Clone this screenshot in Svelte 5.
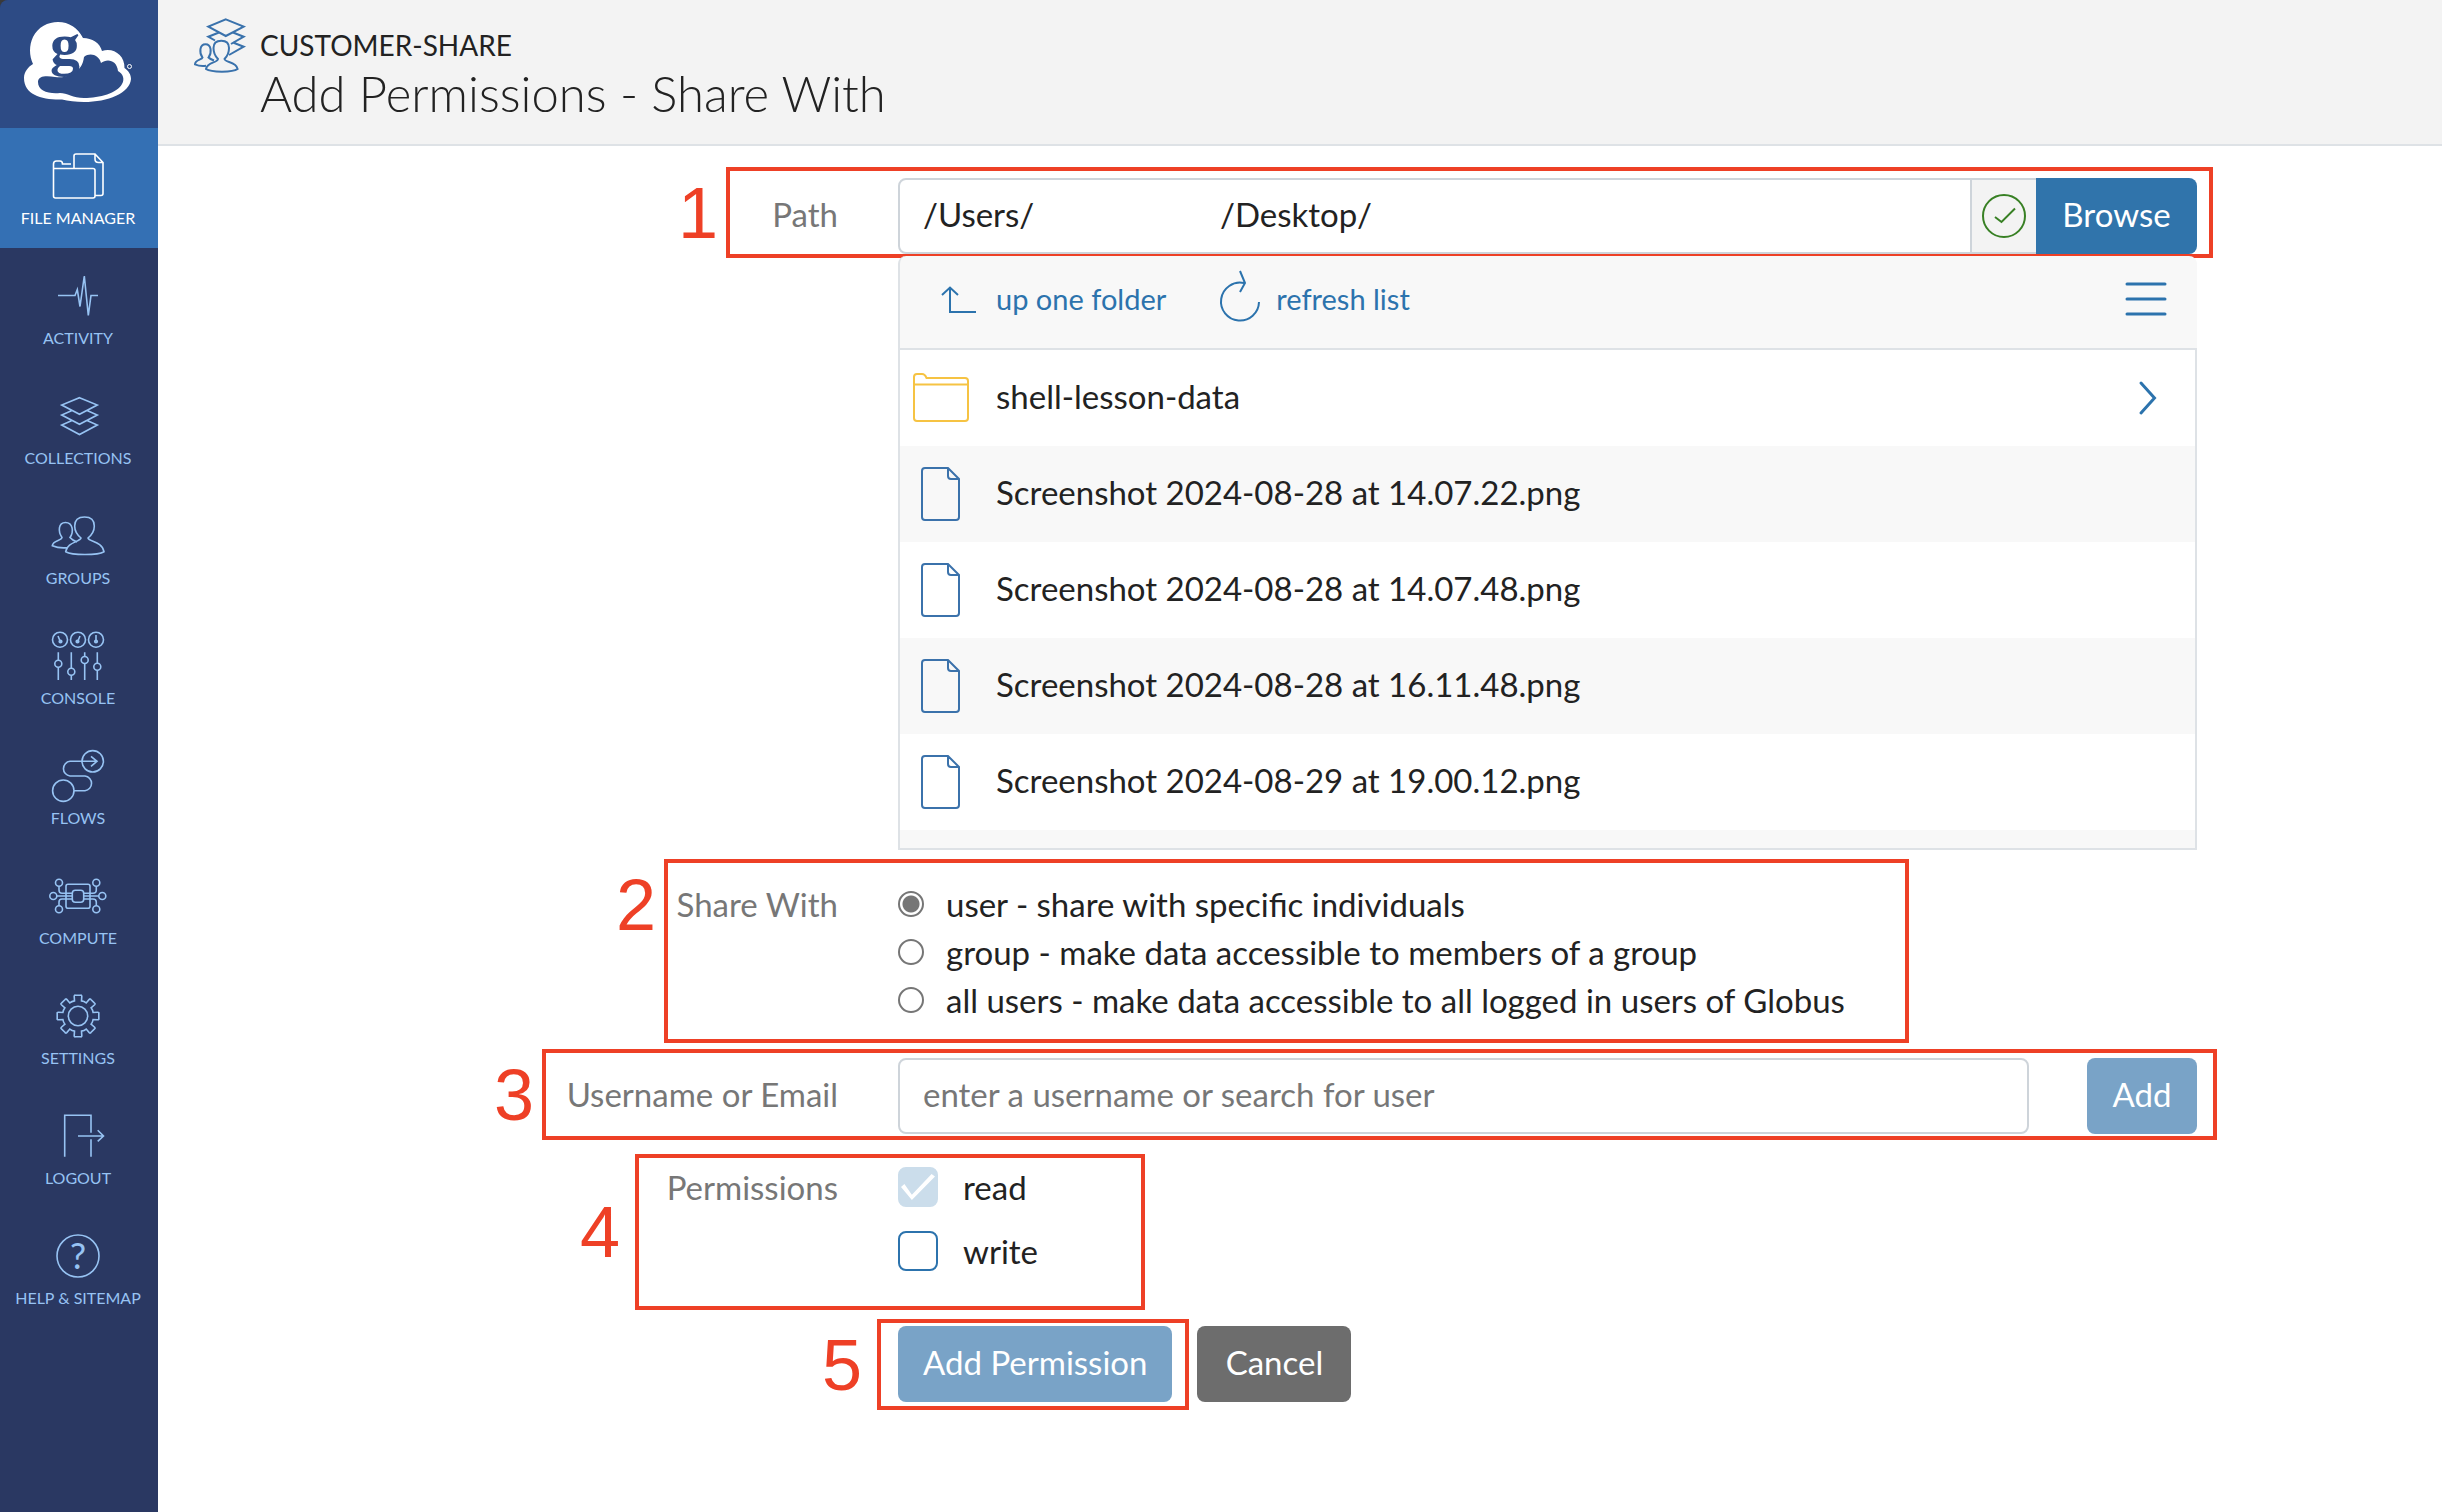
<script>
  const nav = [
    { id: 'files', label: 'FILE MANAGER', active: true },
    { id: 'activity', label: 'ACTIVITY' },
    { id: 'collections', label: 'COLLECTIONS' },
    { id: 'groups', label: 'GROUPS' },
    { id: 'console', label: 'CONSOLE' },
    { id: 'flows', label: 'FLOWS' },
    { id: 'compute', label: 'COMPUTE' },
    { id: 'settings', label: 'SETTINGS' },
    { id: 'logout', label: 'LOGOUT' },
    { id: 'help', label: 'HELP & SITEMAP' }
  ];

  const shots = [
    'Screenshot 2024-08-28 at 14.07.22.png',
    'Screenshot 2024-08-28 at 14.07.48.png',
    'Screenshot 2024-08-28 at 16.11.48.png',
    'Screenshot 2024-08-29 at 19.00.12.png'
  ];

  const audiences = [
    { value: 'user', label: 'user - share with specific individuals' },
    { value: 'group', label: 'group - make data accessible to members of a group' },
    { value: 'all', label: 'all users - make data accessible to all logged in users of Globus' }
  ];

  let audience = $state('user');
  let path = $state('/Users/' + ' '.repeat(22) + '/Desktop/');
  let person = $state('');
  let write = $state(false);

  // Outline of an eight-toothed cog centred on (30, 28)
  function cog() {
    const at = (r, deg) => {
      const a = ((deg - 90) * Math.PI) / 180;
      return `${(30 + r * Math.cos(a)).toFixed(1)} ${(28 + r * Math.sin(a)).toFixed(1)}`;
    };
    let d = '';
    for (let k = 0; k < 8; k++) {
      const m = k * 45;
      d += `${k ? 'L' : 'M'}${at(15.5, m - 13)}L${at(20, m - 11)}Q${at(21.5, m - 10)} ${at(21, m - 7)}L${at(21, m + 7)}Q${at(21.5, m + 10)} ${at(20, m + 11)}L${at(15.5, m + 13)}Q${at(16, m + 22)} ${at(15.5, m + 32)}`;
    }
    return d + 'Z';
  }
</script>

{#snippet navIcon(id)}
  <svg class="nav-icon" viewBox="0 0 60 56" aria-hidden="true">
    {#if id === 'files'}
      <path d="M5.5 20.5H45q2 0 2 2V48q0 2-2 2H7.500q-2 0-2-2V16q0-3 3-3h3.500q2.500 0 2.500 3H23M26 20.500V8q0-2 2-2H47L55 14.500V45.500q0 2-2 2H47M47 6v5q0 3.500 3.500 3.500H55" />
    {:else if id === 'activity'}
      <path d="M10 27.500H27L29.300 21.500L32 38.500L36.300 8L40.300 47.500L43 27.500H50" />
    {:else if id === 'collections'}
      <path d="M31.500 9.700L49.300 17L31.500 26.300L13.700 17ZM24 22.500L13.700 27L31.500 36.300L49.300 27L39 22.500M24 32.500L13.700 37L31.500 46.500L49.300 37L39 32.500" />
    {:else if id === 'groups'}
      <path d="M33 30C28 26 26.700 22 26.700 18C26.700 12 30 9 36.500 9S46.300 12 46.300 18C46.300 22 45 26 40 30C41 34 54 33 56 43.700C50 47.500 24 47.500 17.700 43.700C19 34 32 34 33 30Z" />
      <path d="M29 34Q24 32 22 29.500C26 24 25 14.500 17.500 14.500S10 24 14 29.500C13.500 33 5 32 4.300 37.700Q11 40.500 19 39.700" />
    {:else if id === 'console'}
      <circle cx="12" cy="11.700" r="7.500" /><circle cx="30" cy="11.700" r="7.500" /><circle cx="48" cy="11.700" r="7.500" />
      <path d="M10 8L12.500 14M32 8L29.500 14M48 7V14M10.300 24.300V32M10.300 39V52M23.300 24.300V40M23.300 47V52M36.700 24.300V28.500M36.700 35.500V52M49.300 24.300V35M49.300 42V52" />
      <circle cx="12.500" cy="13.500" r="1.300" /><circle cx="29.500" cy="13.500" r="1.300" /><circle cx="48" cy="13.500" r="1.300" />
      <circle cx="10.300" cy="35.700" r="3.500" /><circle cx="23.300" cy="43.700" r="3.500" /><circle cx="36.700" cy="32" r="3.500" /><circle cx="49.300" cy="38.700" r="3.500" />
    {:else if id === 'flows'}
      <circle cx="44.700" cy="13.300" r="10.700" /><circle cx="15.300" cy="42.700" r="10.700" />
      <path d="M49 13.300H22A7.400 7.400 0 0 0 22 28H37A7.400 7.400 0 0 1 37 42.700H26M43 8.300L49 13.300L43 18.300" />
    {:else if id === 'compute'}
      <rect x="18" y="16.300" width="24" height="24" rx="2" /><rect x="24.300" y="22.300" width="11.400" height="12" rx="3" />
      <circle cx="11" cy="14.700" r="3.500" /><circle cx="48.300" cy="14.700" r="3.500" /><circle cx="5.300" cy="28" r="3.500" />
      <circle cx="54.300" cy="28" r="3.500" /><circle cx="11" cy="41.300" r="3.500" /><circle cx="48.300" cy="41.300" r="3.500" />
      <path d="M9 28H24M36 28H51M11 18.300V22Q11 25.300 14 25.300H24M48.300 18.300V22Q48.300 25.300 45 25.300H36M11 37.700V34Q11 31 14 31H24M48.300 37.700V34Q48.300 31 45 31H36" />
    {:else if id === 'settings'}
      <circle cx="30" cy="28" r="9.700" /><path d={cog()} />
    {:else if id === 'logout'}
      <path d="M16.700 48.700V7.300H43V24.700M43 31.300V48.700M30 28H55.500M49.700 22.300L55.500 28L49.700 33.300" />
    {:else}
      <circle cx="30" cy="28" r="21" />
      <text x="30" y="41" class="mark">?</text>
    {/if}
  </svg>
{/snippet}

<div class="app">
  <nav class="sidebar" aria-label="Main">
    <a class="brand" href="#home" aria-label="Globus home">
      <svg viewBox="0 0 158 128" aria-hidden="true">
        <path class="white" d="M33 64C29 56 29 45 33 37C38 27 48 22 58 22C69 22 78 28 83 38C92 38 100 43 102 51C113 47 125 55 124.500 68C129 71 131 75 131 79C130 93 108 102 84 102C76 102 68 101 62 99.500C42 100 24 95 24 78C24 72 28 67 33 64Z" />
        <path class="blue" d="M74 73C80 69 83 65 84 57C90 52 99 55 101 63C107 58 117 60 118 71C123 74 125 79 122 84C117 93 100 98 84 98C73 98 67 93 60 93C48 94 38 91 38 82C38 75 48 76 55 77C64 78 69 76 74 73Z" />
        <text class="g" x="50" y="64">g</text>
        <circle class="reg" cx="129.500" cy="66.500" r="2" />
      </svg>
    </a>
    {#each nav as item}
      <a class="nav-item" class:active={item.active} href="#{item.id}">
        {@render navIcon(item.id)}
        <span>{item.label}</span>
      </a>
    {/each}
  </nav>

  <main>
    <header>
      <svg class="share-icon" viewBox="0 0 56 58" aria-hidden="true">
        <path d="M35.800 3.300L53.700 10.700L35.800 20L18.300 10.700ZM29 16.500L18.300 20.700L25 24.500M43 16.500L53.700 20.700L41 28M43 26.500L53.700 30.700L39 39" />
        <path d="M28 43C24 39 23.500 35 23.500 32C23.500 27 26 24.700 31.300 24.700S39 27 39 32C39 35 38.500 39 34.500 43C35 47 46 45 47.600 53C43 56.500 21 56.500 16 53C17 46 27.500 47 28 43Z" />
        <path d="M24 44.500Q20 43 18.500 41.500C22 37 21.500 28.300 15.500 28.300S9 37 12.500 41.500C12 44 5 43.500 5 48.300Q10 50.500 16 49.700" />
      </svg>
      <div>
        <p class="share">CUSTOMER-SHARE</p>
        <h1>Add Permissions - Share With</h1>
      </div>
    </header>

    <form>
      <div class="row">
        <label class="caption tall" for="path">Path</label>
        <div class="field">
          <div class="group">
            <input class="box path" id="path" type="text" bind:value={path} />
            <span class="valid">
              <svg viewBox="0 0 48 48" role="img" aria-label="Path is valid">
                <circle cx="24" cy="24" r="21" /><path d="M15 25L21.500 30L35 16.500" />
              </svg>
            </span>
            <button class="btn primary joined" type="button">Browse</button>
          </div>
          <div class="note n1"><span>1</span></div>
        </div>
      </div>

      <div class="row">
        <div class="field picker">
          <div class="tools">
            <button class="tool" type="button">
              <svg viewBox="0 0 40 52" aria-hidden="true"><path d="M2 22L10 14.500L18 22M10 14.500V39H36" /></svg>
              up one folder
            </button>
            <button class="tool" type="button">
              <svg viewBox="0 0 40 52" aria-hidden="true"><path d="M39 29A19 19 0 1 1 24 10M20 -2L25 10L20 19" /></svg>
              refresh list
            </button>
            <button class="menu" type="button" aria-label="List options">
              <svg viewBox="0 0 42 34" aria-hidden="true"><path d="M2 2H40M2 17H40M2 32H40" /></svg>
            </button>
          </div>
          <ul>
            <li>
              <a href="#shell-lesson-data">
                <svg class="file folder" viewBox="0 0 58 56" aria-hidden="true">
                  <path d="M2 7Q2 4 5 4H10Q13 4 14.500 8H53Q56 8 56 11V48Q56 51 53 51H5Q2 51 2 48ZM2 14.500H56" />
                </svg>
                <span>shell-lesson-data</span>
                <svg class="chevron" viewBox="0 0 18 34" aria-hidden="true"><path d="M2 2L15.500 17L2 32" /></svg>
              </a>
            </li>
            {#each shots as shot}
              <li>
                <a href="#file">
                  <svg class="file" viewBox="0 0 58 56" aria-hidden="true">
                    <path d="M10 5Q10 2 13 2H36L47 13V51Q47 54 44 54H13Q10 54 10 51ZM36 2V10Q36 13 39 13H47" />
                  </svg>
                  <span>{shot}</span>
                </a>
              </li>
            {/each}
            <li class="rest"></li>
          </ul>
        </div>
      </div>

      <div class="row share-row" role="radiogroup" aria-labelledby="share-with">
        <span class="caption" id="share-with">Share With</span>
        <div class="field">
          {#each audiences as option}
            <label class="choice">
              <input type="radio" name="audience" value={option.value} bind:group={audience} />
              {option.label}
            </label>
          {/each}
          <div class="note n2"><span>2</span></div>
        </div>
      </div>

      <div class="row user-row">
        <label class="caption tall" for="person">Username or Email</label>
        <div class="field">
          <div class="group spaced">
            <input class="box" id="person" type="text" placeholder="enter a username or search for user" bind:value={person} />
            <button class="btn soft" type="button">Add</button>
          </div>
          <div class="note n3"><span>3</span></div>
        </div>
      </div>

      <div class="row perm-row" role="group" aria-labelledby="permissions">
        <span class="caption mid" id="permissions">Permissions</span>
        <div class="field">
          <label class="tick"><input type="checkbox" checked disabled /> read</label>
          <label class="tick"><input type="checkbox" bind:checked={write} /> write</label>
          <div class="note n4"><span>4</span></div>
        </div>
      </div>

      <div class="row action-row">
        <div class="field actions">
          <button class="btn soft" type="button">Add Permission</button>
          <button class="btn cancel" type="button">Cancel</button>
          <div class="note n5"><span>5</span></div>
        </div>
      </div>
    </form>
  </main>
</div>

<style>
  :global(body) {
    margin: 0;
    background: #fff;
  }
  .app {
    display: flex;
    min-height: 100vh;
    background: #3a3a3a;
    color: #222;
    font: 400 33px/48px Lato, 'Noto Sans', sans-serif;
  }
  .app :global(*) {
    box-sizing: border-box;
  }
  svg {
    display: block;
    flex: none;
    fill: none;
    stroke: currentColor;
    stroke-width: 2;
    overflow: visible;
  }
  input,
  button {
    font: inherit;
    margin: 0;
  }
  button {
    cursor: pointer;
    border: 0;
  }
  a {
    color: inherit;
    text-decoration: none;
  }

  .sidebar {
    flex: none;
    width: 158px;
    background: #2a3862;
    border-top-left-radius: 8px;
    overflow: hidden;
  }
  .brand {
    display: block;
    height: 128px;
    background: #2d4b85;
  }
  .brand svg {
    stroke: none;
  }
  .white {
    fill: #fff;
  }
  .blue {
    fill: #2d4b85;
  }
  .g {
    fill: #2d4b85;
    font: 700 60px 'Liberation Serif', serif;
  }
  .reg {
    stroke: #fff;
    stroke-width: 1;
  }
  .nav-item {
    display: flex;
    flex-direction: column;
    align-items: center;
    height: 120px;
    padding: 20px 2px 0 0;
    color: #97c3f3;
    font-size: 16px;
    line-height: 24px;
  }
  .nav-item span {
    padding-top: 2px;
    white-space: nowrap;
  }
  .nav-item.active {
    background: #3470b4;
    color: #fff;
  }
  .nav-icon {
    width: 60px;
    height: 56px;
    stroke-width: 1.6;
  }
  .mark {
    fill: currentColor;
    stroke: none;
    font-size: 36px;
    text-anchor: middle;
  }

  main {
    flex: 1;
    min-width: 0;
    background: #fff;
  }
  header {
    display: flex;
    gap: 14px;
    height: 146px;
    padding: 16px 32px 0;
    background: #f3f3f3;
    border-bottom: 2px solid #dee2e6;
  }
  .share-icon {
    width: 56px;
    height: 58px;
    color: #3a72ac;
  }
  .share {
    margin: 8px 0 0;
    font-size: 28px;
    line-height: 42px;
  }
  h1 {
    margin: 0;
    font-size: 49px;
    font-weight: 300;
    line-height: 54px;
  }

  form {
    padding-top: 32px;
  }
  .row {
    display: grid;
    grid-template-columns: 740fr 1299fr 245fr;
  }
  .caption {
    padding-right: 60px;
    color: #777;
    text-align: right;
  }
  .tall {
    line-height: 72px;
  }
  .mid {
    line-height: 64px;
  }
  .field {
    position: relative;
    grid-column: 2;
    min-width: 0;
  }
  .group {
    display: flex;
  }
  .spaced {
    gap: 58px;
  }
  .box {
    flex: 1;
    min-width: 0;
    height: 76px;
    padding: 0 23px 4px;
    border: 2px solid #ced4da;
    border-radius: 8px;
    background: #fff;
    color: #222;
    outline: 0;
  }
  .box::placeholder {
    color: #777;
    opacity: 1;
  }
  .path {
    border-radius: 8px 0 0 8px;
  }
  .valid {
    display: flex;
    align-items: center;
    justify-content: center;
    width: 64px;
    border: solid #ced4da;
    border-width: 2px 0;
    background: #f3f3f3;
    color: #388024;
  }
  .valid svg {
    width: 48px;
    height: 48px;
  }
  .btn {
    height: 76px;
    padding: 0 25px 4px;
    border-radius: 8px;
    color: #fff;
    white-space: nowrap;
  }
  .primary {
    background: #3074ab;
  }
  .joined {
    min-width: 161px;
    border-radius: 0 8px 8px 0;
  }
  .soft {
    min-width: 110px;
    background: #79a3c7;
  }
  .cancel {
    min-width: 154px;
    background: #6d6d6d;
  }

  .picker {
    margin-top: 2px;
  }
  .tools {
    display: flex;
    align-items: center;
    gap: 54px;
    height: 92px;
    padding: 0 30px 6px 40px;
    border-left: 2px solid #dee2e6;
    border-radius: 8px 8px 0 0;
    background: #f8f8f8;
  }
  .tool {
    display: flex;
    align-items: center;
    gap: 16px;
    padding: 0;
    background: none;
    color: #2c73ad;
    font-size: 29px;
    line-height: 42px;
  }
  .tool svg {
    width: 40px;
    height: 52px;
  }
  .menu {
    margin-left: auto;
    padding: 0;
    background: none;
    color: #2c73ad;
  }
  .menu svg {
    width: 42px;
    height: 34px;
    stroke-width: 3;
    stroke-linecap: round;
  }
  ul {
    margin: 0;
    padding: 0;
    border: 2px solid #dee2e6;
    list-style: none;
  }
  li:nth-child(even) {
    background: #f8f8f8;
  }
  li a {
    display: flex;
    align-items: center;
    gap: 26px;
    height: 96px;
    padding: 0 38px 0 12px;
  }
  li span {
    flex: 1;
    padding-bottom: 4px;
  }
  .rest {
    height: 18px;
  }
  .file {
    width: 58px;
    height: 56px;
    color: #3b72ab;
  }
  .folder {
    color: #f6c343;
  }
  .chevron {
    width: 18px;
    height: 34px;
    color: #2c73ad;
    stroke-width: 3;
    stroke-linecap: round;
  }

  .share-row {
    margin-top: 30px;
  }
  .choice,
  .tick {
    display: flex;
    align-items: center;
  }
  .choice {
    gap: 22px;
  }
  .choice input {
    appearance: none;
    width: 26px;
    height: 26px;
    border: 2px solid #767676;
    border-radius: 50%;
    background: #fff;
  }
  .choice input:checked {
    background: radial-gradient(circle, #767676 8px, #fff 9px);
  }
  .user-row {
    margin-top: 34px;
  }
  .perm-row {
    margin-top: 21px;
  }
  .tick {
    height: 64px;
    gap: 25px;
  }
  .tick input {
    appearance: none;
    width: 40px;
    height: 40px;
    border: 2px solid #2c73ad;
    border-radius: 8px;
    background: #fff;
  }
  .tick input:checked {
    display: grid;
    place-items: center;
    border-color: #cbddeb;
    background: #cbddeb;
  }
  .tick input:checked::before {
    content: '';
    width: 34px;
    height: 26px;
    background: #fff;
    clip-path: polygon(0 50%, 10% 38%, 32% 80%, 90% 0, 100% 10%, 32% 100%);
  }
  .action-row {
    margin-top: 43px;
  }
  .actions {
    display: flex;
    gap: 25px;
  }

  /* Numbered callouts laid over the form */
  .note {
    position: absolute;
    border: 4px solid #ee4026;
    color: #ee4026;
    font: 72px/80px 'Liberation Sans', Arial, sans-serif;
    pointer-events: none;
  }
  .note span {
    position: absolute;
    right: 100%;
    top: 50%;
    width: 60px;
    margin-top: -40px;
    margin-right: 2px;
    text-align: center;
  }
  .n1 {
    inset: -11px -16px -4px -172px;
  }
  .n2 {
    top: -21px;
    bottom: -19px;
    left: -234px;
    width: 1245px;
  }
  .n2 span {
    top: 24%;
  }
  .n3 {
    inset: -9px -20px -6px -356px;
  }
  .n4 {
    top: -1px;
    left: -263px;
    width: 510px;
    height: 156px;
  }
  .n4 span,
  .n5 span {
    margin-right: 9px;
  }
  .n5 {
    left: -21px;
    top: -7px;
    width: 312px;
    height: 91px;
  }
</style>
